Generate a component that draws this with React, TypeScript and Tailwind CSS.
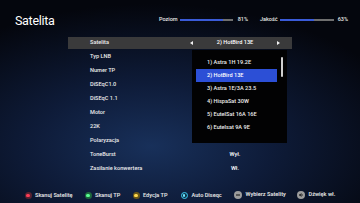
import React from 'react';

const rows: { label: string; value?: string; selected?: boolean }[] = [
  { label: 'Satelita', value: '2) HotBird 13E', selected: true },
  { label: 'Typ LNB' },
  { label: 'Numer TP' },
  { label: 'DiSEqC1.0' },
  { label: 'DiSEqC 1.1' },
  { label: 'Motor' },
  { label: '22K' },
  { label: 'Polaryzacja' },
  { label: 'ToneBurst', value: 'Wył.' },
  { label: 'Zasilanie konwertera', value: 'Wł.' },
];

const satellites = [
  '1) Astra 1H 19.2E',
  '2) HotBird 13E',
  '3) Astra 1E/3A 23.5',
  '4) HispaSat 30W',
  '5) EutelSat 16A 16E',
  '6) Eutelsat 9A 9E',
];

function Arrow({ dir }: { dir: 'left' | 'right' }) {
  return (
    <svg width="3" height="4" viewBox="0 0 3 4" className="shrink-0">
      {dir === 'left' ? (
        <polygon points="3,0 3,4 0,2" fill="#f2f2f2" />
      ) : (
        <polygon points="0,0 0,4 3,2" fill="#f2f2f2" />
      )}
    </svg>
  );
}

function SignalBar({ percent }: { percent: number }) {
  return (
    <div className="h-[2px] bg-[#6f6f6f]">
      <div className="h-full bg-[#3a5bd8]" style={{ width: `${percent}%` }} />
    </div>
  );
}

function Dot({ ring, core }: { ring: string; core: string }) {
  return (
    <span className={`w-[7px] h-[7px] rounded-full flex items-center justify-center shrink-0 ${ring}`}>
      <span className={`w-[3.5px] h-[3.5px] rounded-full ${core}`} />
    </span>
  );
}

export default function App() {
  return (
    <div className="w-[360px] h-[203px] relative overflow-hidden flex flex-col text-white font-['Roboto','Liberation_Sans',sans-serif] bg-[radial-gradient(ellipse_75%_70%_at_42%_72%,#18305a_0%,#0e1b38_45%,#04060d_100%)]">
      {/* header */}
      <div className="h-[36px] shrink-0 flex items-start justify-between pl-[15px] pr-[12px]">
        <span className="mt-[15px] text-[12.5px] leading-none tracking-[-0.3px]">Satelita</span>
        <div className="mt-[17px] flex items-center text-[5.5px] font-medium leading-none text-[#e8e8e8]">
          <span>Poziom</span>
          <div className="w-[53px] ml-[2px]">
            <SignalBar percent={81} />
          </div>
          <span className="ml-[5px]">81%</span>
          <span className="ml-[12px]">Jakość</span>
          <div className="w-[54px] ml-[2px]">
            <SignalBar percent={63} />
          </div>
          <span className="ml-[4px]">63%</span>
        </div>
      </div>

      {/* settings rows */}
      <div className="ml-[68px] w-[224px] flex flex-col shrink-0">
        {rows.map((row) => (
          <div key={row.label} className="h-[14px] flex items-center">
            <div
              className={`h-[12px] w-full flex items-center text-[5.6px] font-medium leading-none ${
                row.selected ? 'bg-[#3a3a3b]' : ''
              }`}
            >
              <span className="w-[110px] pl-[22px] text-[#ececec]">{row.label}</span>
              <div className="w-[114px] px-[12px] flex items-center justify-between">
                {row.selected ? <Arrow dir="left" /> : <span />}
                <span className="text-white">{row.value}</span>
                {row.selected ? <Arrow dir="right" /> : <span />}
              </div>
            </div>
          </div>
        ))}
      </div>

      {/* satellite dropdown */}
      <div className="absolute left-[192px] top-[50px] w-[95px] h-[93px] bg-[#020203] pt-[6px]">
        {satellites.map((s, i) =>
          i === 1 ? (
            <div
              key={s}
              className="h-[13px] ml-[4px] w-[81px] bg-[#2c4fd6] pl-[11px] flex items-center text-[5.6px] font-medium leading-none"
            >
              {s}
            </div>
          ) : (
            <div key={s} className="h-[13px] pl-[15px] flex items-center text-[5.6px] font-medium leading-none text-[#ededed]">
              {s}
            </div>
          )
        )}
        <div className="absolute left-[89px] top-[7px] w-[1.5px] h-[20px] rounded-full bg-[#cfcfcf]" />
      </div>

      {/* footer */}
      <div className="flex-1 flex items-end pb-[4px] pl-[24.5px] text-[5.6px] font-semibold leading-none text-[#e4e4e4]">
        <div className="w-[60px] flex items-center gap-[3.5px]">
          <Dot ring="bg-[#5a2230]" core="bg-[#ff3d58]" />
          <span>Skanuj Satelitę</span>
        </div>
        <div className="w-[48px] flex items-center gap-[3.5px]">
          <Dot ring="bg-[#1d6a3c]" core="bg-[#5cff95]" />
          <span>Skanuj TP</span>
        </div>
        <div className="w-[48px] flex items-center gap-[3.5px]">
          <Dot ring="bg-[#6a5718]" core="bg-[#ffd94d]" />
          <span>Edycja TP</span>
        </div>
        <div className="w-[53px] flex items-center gap-[4px]">
          <span className="w-[7px] h-[7px] rounded-full border border-[#3cc8f2] bg-[#0d3348] flex items-center justify-center shrink-0">
            <span className="w-[2.5px] h-[2.5px] rounded-full bg-[#6fe4ff]" />
          </span>
          <span>Auto Diseqc</span>
        </div>
        <div className="w-[63px] flex items-center gap-[4px]">
          <svg width="8" height="8" viewBox="0 0 8 8" className="shrink-0">
            <circle cx="4" cy="4" r="4" fill="#9c9c9c" />
            <rect x="2" y="3.3" width="4" height="1.4" rx="0.3" fill="#3c3c3c" />
          </svg>
          <span>Wybierz Satelity</span>
        </div>
        <div className="flex items-center gap-[4px]">
          <svg width="8" height="8" viewBox="0 0 8 8" className="shrink-0">
            <circle cx="4" cy="4" r="4" fill="#9c9c9c" />
            <polygon points="2,3.2 3,3.2 4.6,2 4.6,6 3,4.8 2,4.8" fill="#2e2e2e" />
            <path d="M5.3 3.1 Q6 4 5.3 4.9" stroke="#2e2e2e" strokeWidth="0.6" fill="none" />
          </svg>
          <span>Dźwięk wł.</span>
        </div>
      </div>
    </div>
  );
}
